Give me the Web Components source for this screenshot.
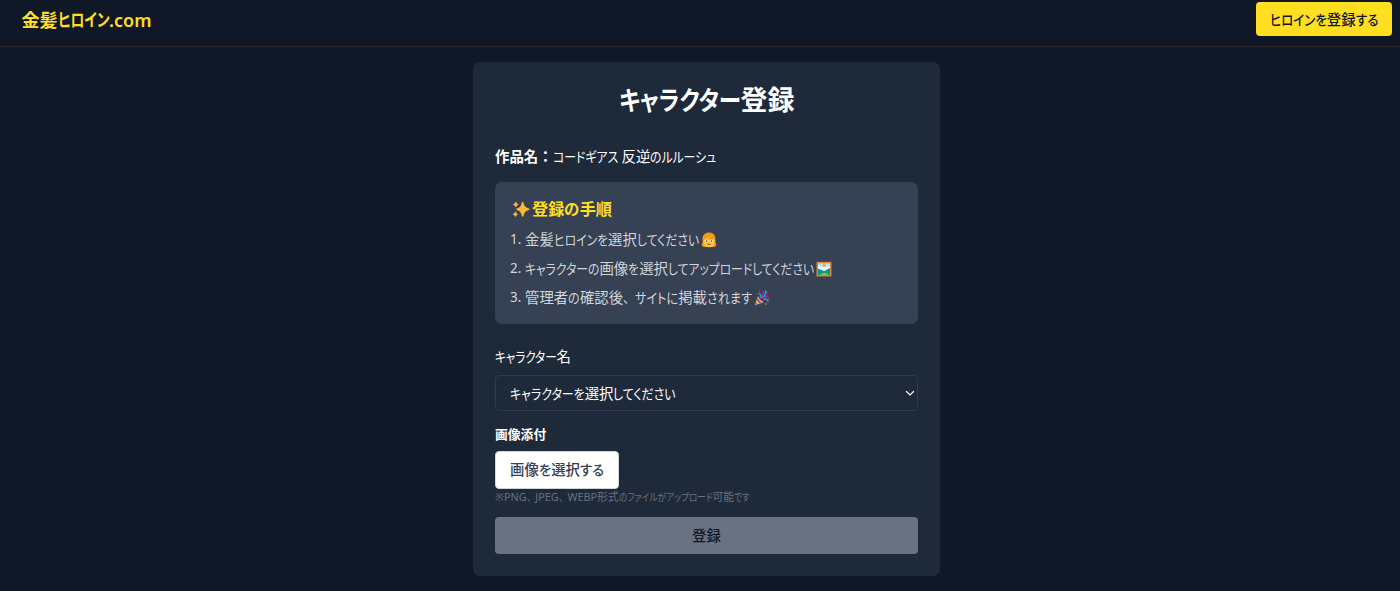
<!DOCTYPE html>
<html lang="ja">
<head>
<meta charset="utf-8">
<title>金髪ヒロイン.com</title>
<style>
	body {
		margin: 0;
		height: 591px;
		overflow: hidden;
		background: #101828;
		color: #fff;
		font-family: "Noto Sans", "Noto Sans CJK JP", sans-serif;
		font-size: 14.4px;
	}
</style>
</head>
<body>
<site-header>
	<fit-text slot="logo" width="130">金髪ヒロイン.com</fit-text>
	<fit-text slot="action" width="108">ヒロインを登録する</fit-text>
</site-header>
<form-card>
	<fit-text slot="title" width="176">キャラクター登録</fit-text>
	<work-name>
		<b slot="label">作品名：</b>
		<fit-text width="164">コードギアス 反逆のルルーシュ</fit-text>
	</work-name>
	<step-list>
		<emoji-icon slot="title" name="sparkles"></emoji-icon>
		<fit-text slot="title" width="80">登録の手順</fit-text>
		<step-item number="1"><fit-text width="174">金髪ヒロインを選択してください</fit-text><emoji-icon name="girl"></emoji-icon></step-item>
		<step-item number="2"><fit-text width="289">キャラクターの画像を選択してアップロードしてください</fit-text><emoji-icon name="picture"></emoji-icon></step-item>
		<step-item number="3"><fit-text width="227">管理者の確認後、サイトに掲載されます</fit-text><emoji-icon name="party"></emoji-icon></step-item>
	</step-list>
	<select-field>
		<fit-text slot="label" width="76">キャラクター名</fit-text>
		<fit-text width="166">キャラクターを選択してください</fit-text>
	</select-field>
	<file-field>
		<fit-text slot="label" width="51">画像添付</fit-text>
		<fit-text width="94">画像を選択する</fit-text>
		<fit-text slot="note" width="255">※PNG、JPEG、WEBP形式のファイルがアップロード可能です</fit-text>
	</file-field>
	<submit-button>登録</submit-button>
</form-card>

<script>
class SiteHeader extends HTMLElement {
	constructor() {
		super();
		this.attachShadow({ mode: 'open' });
		this.shadowRoot.innerHTML = `
			<style>
				:host {
					display: flex;
					justify-content: space-between;
					align-items: flex-start;
					box-sizing: border-box;
					height: 47px;
					padding: 2px 8px 0 21.5px;
					border-bottom: 1px solid #2a2528;
				}
				.logo {
					color: #ffdf20;
					font-size: 18px;
					font-weight: 600;
					line-height: 36px;
				}
				button {
					all: unset;
					box-sizing: border-box;
					width: 136px;
					height: 34px;
					border-radius: 4px;
					background: #ffdf20;
					color: #101828;
					font-weight: 500;
					line-height: 35px;
					text-align: center;
				}
			</style>
			<div class="logo"><slot name="logo"></slot></div>
			<button><slot name="action"></slot></button>
		`;
	}
}

class FormCard extends HTMLElement {
	constructor() {
		super();
		this.attachShadow({ mode: 'open' });
		this.shadowRoot.innerHTML = `
			<style>
				:host {
					display: block;
					box-sizing: border-box;
					width: 467px;
					height: 514.5px;
					margin: 14.5px 0 0 473px;
					padding: 21.5px 22px;
					border-radius: 7px;
					background: #1e2939;
				}
				h1 {
					margin: 0 0 28px;
					font-size: 27px;
					font-weight: 700;
					line-height: 34px;
					text-align: center;
				}
			</style>
			<h1><slot name="title"></slot></h1>
			<slot></slot>
		`;
	}
}

class WorkName extends HTMLElement {
	constructor() {
		super();
		this.attachShadow({ mode: 'open' });
		this.shadowRoot.innerHTML = `
			<style>
				:host {
					display: flex;
					height: 22px;
					margin-bottom: 14.5px;
					line-height: 23px;
				}
			</style>
			<slot name="label"></slot><slot></slot>
		`;
	}
}

class StepList extends HTMLElement {
	constructor() {
		super();
		this.attachShadow({ mode: 'open' });
		this.shadowRoot.innerHTML = `
			<style>
				:host {
					display: block;
					box-sizing: border-box;
					height: 142px;
					padding: 14.5px 15px;
					border-radius: 7px;
					background: #364153;
					color: #d1d5dc;
				}
				.title {
					display: flex;
					align-items: center;
					gap: 2px;
					height: 26px;
					margin-bottom: 3px;
					padding-left: 2px;
					color: #ffdf20;
					font-size: 16.2px;
					font-weight: 700;
					line-height: 26px;
				}
			</style>
			<div class="title"><slot name="title"></slot></div>
			<slot></slot>
		`;
	}
}

class StepItem extends HTMLElement {
	constructor() {
		super();
		this.attachShadow({ mode: 'open' });
		this.shadowRoot.innerHTML = `
			<style>
				:host {
					display: flex;
					align-items: center;
					height: 29px;
					line-height: 31px;
				}
				.number {
					width: 15px;
					font-size: 13.5px;
				}
				::slotted(emoji-icon) {
					margin-left: 2px;
				}
			</style>
			<span class="number">${this.getAttribute('number')}.</span><slot></slot>
		`;
	}
}

class SelectField extends HTMLElement {
	constructor() {
		super();
		this.attachShadow({ mode: 'open' });
		this.shadowRoot.innerHTML = `
			<style>
				:host {
					display: block;
					margin-top: 22px;
				}
				.label {
					height: 22px;
					margin-bottom: 7px;
					line-height: 22px;
				}
				.select {
					display: flex;
					justify-content: space-between;
					align-items: center;
					box-sizing: border-box;
					height: 36px;
					padding: 0 2px 0 14px;
					border: 1px solid #303b4b;
					border-radius: 4px;
				}
				svg {
					width: 10px;
					height: 10px;
				}
			</style>
			<div class="label"><slot name="label"></slot></div>
			<div class="select">
				<slot></slot>
				<svg viewBox="0 0 10 10"><path d="M1.2 3.2 5 6.9l3.8-3.7" fill="none" stroke="#fff" stroke-width="1.2"/></svg>
			</div>
		`;
	}
}

class FileField extends HTMLElement {
	constructor() {
		super();
		this.attachShadow({ mode: 'open' });
		this.shadowRoot.innerHTML = `
			<style>
				:host {
					display: block;
					margin-top: 13px;
				}
				.label {
					height: 20px;
					margin-bottom: 7px;
					font-size: 12.8px;
					font-weight: 700;
					line-height: 20px;
				}
				button {
					all: unset;
					display: block;
					box-sizing: border-box;
					width: 124px;
					height: 38px;
					border: 1px solid #d1d5dc;
					border-radius: 4px;
					background: #fff;
					color: #364153;
					font-weight: 500;
					line-height: 36px;
					text-align: center;
				}
				.note {
					height: 16px;
					color: #6a7282;
					font-size: 10.8px;
					line-height: 15px;
				}
			</style>
			<div class="label"><slot name="label"></slot></div>
			<button><slot></slot></button>
			<div class="note"><slot name="note"></slot></div>
		`;
	}
}

class SubmitButton extends HTMLElement {
	constructor() {
		super();
		this.attachShadow({ mode: 'open' });
		this.shadowRoot.innerHTML = `
			<style>
				:host {
					display: block;
					margin-top: 12.5px;
				}
				button {
					all: unset;
					display: block;
					width: 100%;
					height: 37px;
					border-radius: 4px;
					background: #6a7282;
					color: #101828;
					font-weight: 500;
					line-height: 38px;
					text-align: center;
				}
			</style>
			<button><slot></slot></button>
		`;
	}
}

const EMOJI = {
	sparkles: `
		<g fill="#fcb93a">
			<path d="M10.7 1.5Q11.6 7.2 16.800 8.2 11.6 9.3 10.7 15 9.7 9.3 5 8.2 9.7 7.2 10.7 1.5Z" stroke="#fcb93a" stroke-width="1.500" stroke-linejoin="round"/>
			<path d="M3.8.8Q4.2 3 6.4 3.5 4.2 4 3.8 6.2 3.3 4 1.2 3.5 3.3 3 3.8.8ZM3.5 10.7Q3.9 12.7 5.8 13.2 3.9 13.7 3.5 15.7 3 13.7 1 13.2 3 12.7 3.5 10.7Z" stroke="#fcb93a" stroke-width=".5"/>
		</g>`,
	girl: `
		<path d="M1.6 7.5C1.3 2.6 4.300.5 8 .5s6.8 2.200 6.400 7c0 2.500.200 3.800 1 5.300-.600 1.800-2.300 2.600-4.200 2.200H4.800c-2 .400-3.700-.500-4.200-2.200.900-1.500 1.100-2.800 1-5.300Z" fill="#f59b15"/>
		<circle cx="8" cy="9.600" r="5.700" fill="#ffc83d"/>
		<path d="M2.300 7.700C4.400 7.300 5.600 6.600 6.300 5.500 8 6.900 11 7.300 13.700 7.600 13.500 3.600 11 2.200 8 2.200s-5.500 1.700-5.700 5.500Z" fill="#f59b15"/>
		<circle cx="5.500" cy="9" r="1.300" fill="#fff"/><circle cx="10.500" cy="9" r="1.300" fill="#fff"/>
		<circle cx="5.600" cy="9.100" r=".8" fill="#503b3b"/><circle cx="10.400" cy="9.100" r=".8" fill="#503b3b"/>
		<path d="M5.800 11.800h4.400Q8 14.200 5.800 11.800Z" fill="#c9323e"/>`,
	picture: `
		<path d="M.5.8h15v14.700H.5Z" fill="#d3883e"/>
		<path d="M2 2.300h12V14H2Z" fill="#b4e2fb"/>
		<path d="M2 6q2-2 4 0h4q2-1.600 4 0v4H2Z" fill="#eef8ff"/>
		<circle cx="8" cy="4.300" r="1.600" fill="#f9a64a"/>
		<path d="M2 7.800 6 9l2 1.200L14 7v7H2Z" fill="#12947e"/>
		<path d="M4 14q4-4.500 9 0Z" fill="#86c440"/>`,
	party: `
		<path d="M4 6 .8 15.500 10 12Z" fill="#f7bd45"/>
		<path d="m3.300 8 4.500 5-2 .7-3.200-3.800ZM1.800 12.300l2 2.200-1.500.5-1-1.300Z" fill="#7658c9"/>
		<path d="M4.200 6C6 6 10 9.500 10 12 7.500 11.500 4.300 8.500 4.200 6Z" fill="#60388c"/>
		<path d="M4.500 3.500C7 4 7.500 6 6.800 8M8 7.500c1.500-1.400 3-1 3.200-3 0-1.500 1-2.300 2.300-2M9.500 9.500c2-1 4.500-.300 4.500 2.500" fill="none" stroke="#10a0e8" stroke-width="1.600"/>
		<path d="M8.500 1c1.500 2 1 4-.800 5.500M10 8.500c1.500-2.300 3-2.600 5-2.500" fill="none" stroke="#d81b80" stroke-width="1.500"/>
		<g fill="#e3257b"><circle cx="5.500" cy="1.600" r=".8"/><circle cx="14.500" cy="8.800" r=".8"/><circle cx="2.800" cy="3.800" r=".8"/></g>
		<g fill="#f9a23a"><circle cx="11.500" cy="1.300" r=".7"/><circle cx="12" cy="14" r=".8"/></g>`
};

class EmojiIcon extends HTMLElement {
	constructor() {
		super();
		this.attachShadow({ mode: 'open' });
		const name = this.getAttribute('name');
		const size = name === 'sparkles' ? 18 : 16;
		this.shadowRoot.innerHTML = `
			<style>
				:host {
					display: block;
					flex: none;
					width: ${size}px;
					height: 16px;
				}
				svg {
					display: block;
				}
			</style>
			<svg width="${size}" height="16" viewBox="0 0 ${size} 16">${EMOJI[name]}</svg>
		`;
	}
}

// Condenses the kana only, so that a line comes out at its given width
class FitText extends HTMLElement {
	constructor() {
		super();
		this.attachShadow({ mode: 'open' });
		this.shadowRoot.innerHTML = `
			<style>
				:host {
					display: inline-block;
					white-space: nowrap;
					text-align: left;
				}
				::slotted(span) {
					display: inline-block;
					font-size: 0.98em;
					font-feature-settings: "palt";
					transform-origin: left;
				}
				::slotted(.comma) {
					font-feature-settings: normal;
				}
			</style>
			<slot></slot>
		`;
	}

	connectedCallback() {
		const kana = /([\u3040-\u30ff]+|\u3001)/;
		const parts = this.textContent.split(kana);
		const width = Number(this.getAttribute('width'));
		const spans = [];
		this.textContent = '';
		parts.forEach((part) => {
			if (kana.test(part)) {
				const span = document.createElement('span');
				span.textContent = part;
				if (part === '、') span.className = 'comma';
				this.appendChild(span);
				spans.push(span);
			} else if (part) {
				this.appendChild(document.createTextNode(part));
			}
		});
		const natural = this.getBoundingClientRect().width;
		const widths = spans.map((span) => span.getBoundingClientRect().width);
		const total = widths.reduce((sum, w) => sum + w, 0);
		if (total) {
			const scale = (total + width - natural) / total;
			spans.forEach((span, i) => {
				span.style.transform = `scaleX(${scale})`;
				span.style.marginRight = widths[i] * (scale - 1) + 'px';
			});
		}
		this.style.width = width + 'px';
	}
}

// fit-text measures itself, so it goes last
customElements.define('site-header', SiteHeader);
customElements.define('form-card', FormCard);
customElements.define('work-name', WorkName);
customElements.define('step-list', StepList);
customElements.define('step-item', StepItem);
customElements.define('select-field', SelectField);
customElements.define('file-field', FileField);
customElements.define('submit-button', SubmitButton);
customElements.define('emoji-icon', EmojiIcon);
customElements.define('fit-text', FitText);
</script>
</body>
</html>
